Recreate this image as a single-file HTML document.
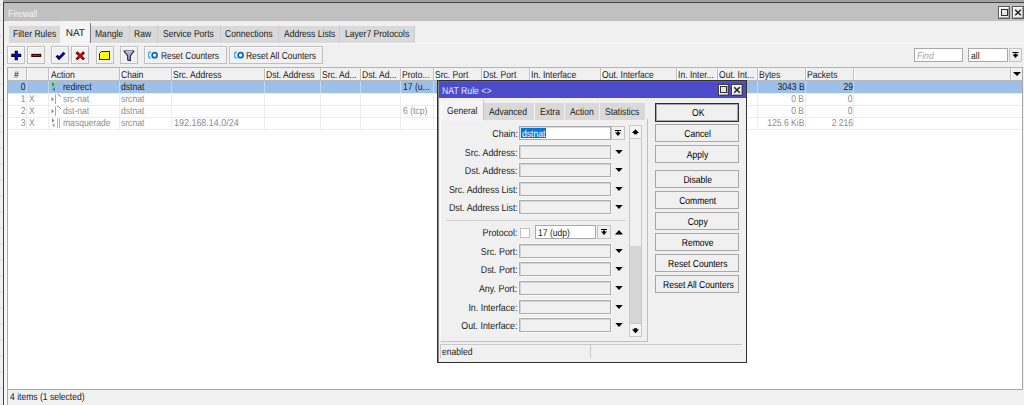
<!DOCTYPE html><html><head><meta charset="utf-8"><style>
*{margin:0;padding:0}
html,body{width:1024px;height:405px;overflow:hidden;background:#f0f0f0}
body{position:relative;font-family:"Liberation Sans",sans-serif;font-size:10px;text-rendering:geometricPrecision}
.a{position:absolute}
.t{position:absolute;white-space:nowrap;line-height:12px;transform:scaleX(0.855);transform-origin:0 0}
.t.r{transform-origin:100% 0}
.cb{text-align:center;white-space:nowrap;font-size:10px}
.cb span{display:inline-block;transform:scaleX(0.855);transform-origin:50% 0}
</style></head><body><div class="a" style="left:3px;top:0px;width:1021px;height:1px;background:#a0a0a0;"></div>
<div class="a" style="left:3px;top:1px;width:1021px;height:1px;background:#a8a8a8;"></div>
<div class="a" style="left:3px;top:2px;width:1021px;height:1px;background:#404040;"></div>
<div class="a" style="left:3px;top:2px;width:1px;height:403px;background:#404040;"></div>
<div class="a" style="left:4px;top:3px;width:1020px;height:18px;background:#c0c0c0;"></div>
<div class="t" style="left:8px;top:9px;color:#f4f4f4;transform:scaleX(0.85);">Firewall</div>
<div class="a" style="left:998px;top:6px;width:12px;height:13px;background:#eeeeee;border:1px solid #5a5a5a;box-sizing:border-box;"></div>
<div class="a" style="left:999px;top:7px;width:10px;height:11px;border-top:1px solid #fff;border-left:1px solid #fff;border-right:1px solid #a8a8a8;border-bottom:1px solid #a8a8a8;box-sizing:border-box;"></div>
<div class="a" style="left:1001px;top:9px;width:7px;height:7px;background:#ebe6eb;border:1px solid #303030;border-top-width:1.5px;box-sizing:border-box;"></div>
<div class="a" style="left:1012px;top:6px;width:12px;height:13px;background:#eeeeee;border:1px solid #5a5a5a;box-sizing:border-box;"></div>
<div class="a" style="left:1013px;top:7px;width:10px;height:11px;border-top:1px solid #fff;border-left:1px solid #fff;border-right:1px solid #a8a8a8;border-bottom:1px solid #a8a8a8;box-sizing:border-box;"></div>
<svg class="a" style="left:1012px;top:6px" width="12" height="13"><path d="M3.2 3.7L8.8 9.3M8.8 3.7L3.2 9.3" stroke="#252525" stroke-width="1.5"/></svg>
<div class="a" style="left:9px;top:26px;width:51px;height:17px;background:#d9d9d9;"></div>
<div class="t" style="left:12.8px;top:29px;color:#1a1a1a;">Filter Rules</div>
<div class="a" style="left:60px;top:22px;width:31px;height:21px;background:#f4f4f4;"></div>
<div class="a" style="left:90px;top:23px;width:1px;height:20px;background:#7c7c7c;"></div>
<div class="t" style="left:65.7px;top:28px;color:#1a1a1a;transform:scaleX(1.0);">NAT</div>
<div class="a" style="left:91px;top:26px;width:38px;height:17px;background:#d9d9d9;"></div>
<div class="a" style="left:129px;top:25px;width:1px;height:18px;background:#cdcdcd;"></div>
<div class="t" style="left:94.8px;top:29px;color:#1a1a1a;">Mangle</div>
<div class="a" style="left:130px;top:26px;width:27px;height:17px;background:#d9d9d9;"></div>
<div class="a" style="left:157px;top:25px;width:1px;height:18px;background:#cdcdcd;"></div>
<div class="t" style="left:134.0px;top:29px;color:#1a1a1a;">Raw</div>
<div class="a" style="left:158px;top:26px;width:62px;height:17px;background:#d9d9d9;"></div>
<div class="a" style="left:220px;top:25px;width:1px;height:18px;background:#cdcdcd;"></div>
<div class="t" style="left:163.2px;top:29px;color:#1a1a1a;">Service Ports</div>
<div class="a" style="left:221px;top:26px;width:57px;height:17px;background:#d9d9d9;"></div>
<div class="a" style="left:278px;top:25px;width:1px;height:18px;background:#cdcdcd;"></div>
<div class="t" style="left:224.7px;top:29px;color:#1a1a1a;">Connections</div>
<div class="a" style="left:279px;top:26px;width:60px;height:17px;background:#d9d9d9;"></div>
<div class="a" style="left:339px;top:25px;width:1px;height:18px;background:#cdcdcd;"></div>
<div class="t" style="left:283.5px;top:29px;color:#1a1a1a;">Address Lists</div>
<div class="a" style="left:340px;top:26px;width:74px;height:17px;background:#d9d9d9;"></div>
<div class="a" style="left:414px;top:25px;width:1px;height:18px;background:#cdcdcd;"></div>
<div class="t" style="left:345.1px;top:29px;color:#1a1a1a;">Layer7 Protocols</div>
<div class="a" style="left:4px;top:43px;width:1020px;height:1px;background:#f8f8f8;"></div>
<div class="a" style="left:7px;top:46px;width:18px;height:18px;background:#f0f0f0;border:1px solid #c0c0c0;box-sizing:border-box;box-shadow:inset 1px 1px 0 #fbfbfb;"></div>
<div class="a" style="left:27px;top:46px;width:18px;height:18px;background:#f0f0f0;border:1px solid #c0c0c0;box-sizing:border-box;box-shadow:inset 1px 1px 0 #fbfbfb;"></div>
<div class="a" style="left:51px;top:46px;width:18px;height:18px;background:#f0f0f0;border:1px solid #c0c0c0;box-sizing:border-box;box-shadow:inset 1px 1px 0 #fbfbfb;"></div>
<div class="a" style="left:71px;top:46px;width:18px;height:18px;background:#f0f0f0;border:1px solid #c0c0c0;box-sizing:border-box;box-shadow:inset 1px 1px 0 #fbfbfb;"></div>
<div class="a" style="left:96px;top:46px;width:18px;height:18px;background:#f0f0f0;border:1px solid #c0c0c0;box-sizing:border-box;box-shadow:inset 1px 1px 0 #fbfbfb;"></div>
<div class="a" style="left:120px;top:46px;width:18px;height:18px;background:#f0f0f0;border:1px solid #c0c0c0;box-sizing:border-box;box-shadow:inset 1px 1px 0 #fbfbfb;"></div>
<div class="a" style="left:144px;top:46px;width:83px;height:18px;background:#f0f0f0;border:1px solid #c0c0c0;box-sizing:border-box;box-shadow:inset 1px 1px 0 #fbfbfb;"></div>
<div class="a" style="left:229px;top:46px;width:94px;height:18px;background:#f0f0f0;border:1px solid #c0c0c0;box-sizing:border-box;box-shadow:inset 1px 1px 0 #fbfbfb;"></div>
<svg class="a" style="left:7px;top:46px" width="18" height="18"><path d="M9.3 4.8V14.2M4.3 9.4H14.2" stroke="#000018" stroke-width="3.1"/><path d="M9.3 5.8V13.2M5.3 9.4H13.2" stroke="#0000ff" stroke-width="1.3"/></svg>
<svg class="a" style="left:27px;top:46px" width="18" height="18"><path d="M4.3 9.4H14.2" stroke="#180000" stroke-width="3.1"/><path d="M5.3 9.4H13.2" stroke="#ff0000" stroke-width="1.3"/></svg>
<svg class="a" style="left:51px;top:46px" width="18" height="18"><path d="M5.6 9.6L8 12.2L13.4 6.8" fill="none" stroke="#000020" stroke-width="2.7"/><path d="M6.2 9.9L8 11.7L12.9 7.2" fill="none" stroke="#0000ff" stroke-width="1.3"/></svg>
<svg class="a" style="left:71px;top:46px" width="18" height="18"><path d="M5.5 6.2L13 13.4M13 6.2L5.5 13.4" stroke="#2a0000" stroke-width="2.7"/><path d="M6.1 6.8L12.4 12.8M12.4 6.8L6.1 12.8" stroke="#ff0000" stroke-width="1.4"/></svg>
<svg class="a" style="left:96px;top:46px" width="18" height="18"><path d="M3.5 7.5L5.5 5.5H13.5V13.5H3.5Z" fill="#ffff00" stroke="#202020" stroke-width="1"/></svg>
<svg class="a" style="left:120px;top:46px" width="18" height="18"><path d="M4 5H14L10.3 10V14.8L7.7 14V10Z" fill="#a4ace0" stroke="#1c1c30" stroke-width="1.1" stroke-linejoin="round"/><path d="M5.5 5.6H12.5" stroke="#e8ecff" stroke-width=".8"/></svg>
<svg class="a" style="left:148px;top:50px" width="11" height="10"><path d="M2.6 1.8A3.6 3.4 0 0 0 2.6 8.2" fill="none" stroke="#30b0ff" stroke-width="1.5"/><circle cx="6.6" cy="5.2" r="2.5" fill="#e8f4ff" stroke="#1464b4" stroke-width="1.7"/></svg>
<svg class="a" style="left:233.5px;top:50px" width="11" height="10"><path d="M2.6 1.8A3.6 3.4 0 0 0 2.6 8.2" fill="none" stroke="#30b0ff" stroke-width="1.5"/><circle cx="6.6" cy="5.2" r="2.5" fill="#e8f4ff" stroke="#1464b4" stroke-width="1.7"/></svg>
<div class="t" style="left:160.5px;top:51px;color:#1a1a1a;transform:scaleX(0.835);">Reset Counters</div>
<div class="t" style="left:245.5px;top:51px;color:#1a1a1a;transform:scaleX(0.845);">Reset All Counters</div>
<div class="a" style="left:914px;top:48px;width:49px;height:14px;background:#ffffff;border:1px solid #a8a8a8;box-sizing:border-box;"></div>
<div class="t" style="left:917px;top:51px;color:#a8a8a8;font-style:italic;">Find</div>
<div class="a" style="left:968px;top:48px;width:40px;height:14px;background:#ffffff;border:1px solid #a8a8a8;box-sizing:border-box;"></div>
<div class="t" style="left:971px;top:51px;color:#1a1a1a;">all</div>
<div class="a" style="left:1009px;top:48px;width:13px;height:14px;background:#f0f0f0;border:1px solid #c4c4c4;box-sizing:border-box;"></div>
<svg class="a" style="left:1009px;top:48px" width="13" height="14"><path d="M3.5 4.5H9.5" stroke="#000" stroke-width="1"/><path d="M3.5 6.5H9.5L6.5 10Z" fill="#000"/><path d="M5.5 5.5H7.5V7.5H5.5Z" fill="#000"/></svg>
<div class="a" style="left:7px;top:67px;width:1016px;height:323px;background:#ffffff;"></div>
<div class="a" style="left:7px;top:67px;width:1016px;height:1px;background:#b4b4b4;"></div>
<div class="a" style="left:7px;top:67px;width:1px;height:323px;background:#a8a8a8;"></div>
<div class="a" style="left:1022px;top:67px;width:1px;height:323px;background:#a8a8a8;"></div>
<div class="a" style="left:7px;top:389px;width:1016px;height:1px;background:#a8a8a8;"></div>
<div class="a" style="left:8px;top:68px;width:1014px;height:12px;background:#f0f0f0;"></div>
<div class="a" style="left:8px;top:80px;width:1014px;height:1px;background:#b8b8b8;"></div>
<div class="a" style="left:8px;top:81px;width:1014px;height:12px;background:#9dc0e9;"></div>
<div class="a" style="left:8px;top:93px;width:1014px;height:1px;background:#ececec;"></div>
<div class="a" style="left:8px;top:105px;width:1014px;height:1px;background:#ececec;"></div>
<div class="a" style="left:8px;top:117px;width:1014px;height:1px;background:#ececec;"></div>
<div class="a" style="left:8px;top:129px;width:1014px;height:1px;background:#ececec;"></div>
<div class="a" style="left:26px;top:68px;width:1px;height:12px;background:#c0c0c0;"></div>
<div class="a" style="left:27px;top:68px;width:1px;height:12px;background:#ffffff;"></div>
<div class="a" style="left:26px;top:93px;width:1px;height:37px;background:#ececec;"></div>
<div class="a" style="left:26px;top:81px;width:1px;height:12px;background:#c4d8f2;"></div>
<div class="a" style="left:48px;top:68px;width:1px;height:12px;background:#c0c0c0;"></div>
<div class="a" style="left:49px;top:68px;width:1px;height:12px;background:#ffffff;"></div>
<div class="a" style="left:48px;top:93px;width:1px;height:37px;background:#ececec;"></div>
<div class="a" style="left:48px;top:81px;width:1px;height:12px;background:#c4d8f2;"></div>
<div class="a" style="left:119px;top:68px;width:1px;height:12px;background:#c0c0c0;"></div>
<div class="a" style="left:120px;top:68px;width:1px;height:12px;background:#ffffff;"></div>
<div class="a" style="left:119px;top:93px;width:1px;height:37px;background:#ececec;"></div>
<div class="a" style="left:119px;top:81px;width:1px;height:12px;background:#c4d8f2;"></div>
<div class="a" style="left:171px;top:68px;width:1px;height:12px;background:#c0c0c0;"></div>
<div class="a" style="left:172px;top:68px;width:1px;height:12px;background:#ffffff;"></div>
<div class="a" style="left:171px;top:93px;width:1px;height:37px;background:#ececec;"></div>
<div class="a" style="left:171px;top:81px;width:1px;height:12px;background:#c4d8f2;"></div>
<div class="a" style="left:264px;top:68px;width:1px;height:12px;background:#c0c0c0;"></div>
<div class="a" style="left:265px;top:68px;width:1px;height:12px;background:#ffffff;"></div>
<div class="a" style="left:264px;top:93px;width:1px;height:37px;background:#ececec;"></div>
<div class="a" style="left:264px;top:81px;width:1px;height:12px;background:#c4d8f2;"></div>
<div class="a" style="left:320px;top:68px;width:1px;height:12px;background:#c0c0c0;"></div>
<div class="a" style="left:321px;top:68px;width:1px;height:12px;background:#ffffff;"></div>
<div class="a" style="left:320px;top:93px;width:1px;height:37px;background:#ececec;"></div>
<div class="a" style="left:320px;top:81px;width:1px;height:12px;background:#c4d8f2;"></div>
<div class="a" style="left:360px;top:68px;width:1px;height:12px;background:#c0c0c0;"></div>
<div class="a" style="left:361px;top:68px;width:1px;height:12px;background:#ffffff;"></div>
<div class="a" style="left:360px;top:93px;width:1px;height:37px;background:#ececec;"></div>
<div class="a" style="left:360px;top:81px;width:1px;height:12px;background:#c4d8f2;"></div>
<div class="a" style="left:400px;top:68px;width:1px;height:12px;background:#c0c0c0;"></div>
<div class="a" style="left:401px;top:68px;width:1px;height:12px;background:#ffffff;"></div>
<div class="a" style="left:400px;top:93px;width:1px;height:37px;background:#ececec;"></div>
<div class="a" style="left:400px;top:81px;width:1px;height:12px;background:#c4d8f2;"></div>
<div class="a" style="left:433px;top:68px;width:1px;height:12px;background:#c0c0c0;"></div>
<div class="a" style="left:434px;top:68px;width:1px;height:12px;background:#ffffff;"></div>
<div class="a" style="left:433px;top:93px;width:1px;height:37px;background:#ececec;"></div>
<div class="a" style="left:433px;top:81px;width:1px;height:12px;background:#c4d8f2;"></div>
<div class="a" style="left:481px;top:68px;width:1px;height:12px;background:#c0c0c0;"></div>
<div class="a" style="left:482px;top:68px;width:1px;height:12px;background:#ffffff;"></div>
<div class="a" style="left:481px;top:93px;width:1px;height:37px;background:#ececec;"></div>
<div class="a" style="left:481px;top:81px;width:1px;height:12px;background:#c4d8f2;"></div>
<div class="a" style="left:529px;top:68px;width:1px;height:12px;background:#c0c0c0;"></div>
<div class="a" style="left:530px;top:68px;width:1px;height:12px;background:#ffffff;"></div>
<div class="a" style="left:529px;top:93px;width:1px;height:37px;background:#ececec;"></div>
<div class="a" style="left:529px;top:81px;width:1px;height:12px;background:#c4d8f2;"></div>
<div class="a" style="left:600px;top:68px;width:1px;height:12px;background:#c0c0c0;"></div>
<div class="a" style="left:601px;top:68px;width:1px;height:12px;background:#ffffff;"></div>
<div class="a" style="left:600px;top:93px;width:1px;height:37px;background:#ececec;"></div>
<div class="a" style="left:600px;top:81px;width:1px;height:12px;background:#c4d8f2;"></div>
<div class="a" style="left:676px;top:68px;width:1px;height:12px;background:#c0c0c0;"></div>
<div class="a" style="left:677px;top:68px;width:1px;height:12px;background:#ffffff;"></div>
<div class="a" style="left:676px;top:93px;width:1px;height:37px;background:#ececec;"></div>
<div class="a" style="left:676px;top:81px;width:1px;height:12px;background:#c4d8f2;"></div>
<div class="a" style="left:717px;top:68px;width:1px;height:12px;background:#c0c0c0;"></div>
<div class="a" style="left:718px;top:68px;width:1px;height:12px;background:#ffffff;"></div>
<div class="a" style="left:717px;top:93px;width:1px;height:37px;background:#ececec;"></div>
<div class="a" style="left:717px;top:81px;width:1px;height:12px;background:#c4d8f2;"></div>
<div class="a" style="left:757px;top:68px;width:1px;height:12px;background:#c0c0c0;"></div>
<div class="a" style="left:758px;top:68px;width:1px;height:12px;background:#ffffff;"></div>
<div class="a" style="left:757px;top:93px;width:1px;height:37px;background:#ececec;"></div>
<div class="a" style="left:757px;top:81px;width:1px;height:12px;background:#c4d8f2;"></div>
<div class="a" style="left:805px;top:68px;width:1px;height:12px;background:#c0c0c0;"></div>
<div class="a" style="left:806px;top:68px;width:1px;height:12px;background:#ffffff;"></div>
<div class="a" style="left:805px;top:93px;width:1px;height:37px;background:#ececec;"></div>
<div class="a" style="left:805px;top:81px;width:1px;height:12px;background:#c4d8f2;"></div>
<div class="a" style="left:853px;top:68px;width:1px;height:12px;background:#c0c0c0;"></div>
<div class="a" style="left:854px;top:68px;width:1px;height:12px;background:#ffffff;"></div>
<div class="a" style="left:853px;top:93px;width:1px;height:37px;background:#ececec;"></div>
<div class="a" style="left:853px;top:81px;width:1px;height:12px;background:#c4d8f2;"></div>
<div class="a" style="left:1010px;top:68px;width:1px;height:12px;background:#c0c0c0;"></div>
<div class="a" style="left:1011px;top:68px;width:1px;height:12px;background:#ffffff;"></div>
<div class="t" style="left:14px;top:70px;color:#1a1a1a;">#</div>
<div class="t" style="left:50.5px;top:70px;color:#1a1a1a;">Action</div>
<div class="t" style="left:121px;top:70px;color:#1a1a1a;">Chain</div>
<div class="t" style="left:172.5px;top:70px;color:#1a1a1a;">Src. Address</div>
<div class="t" style="left:265.5px;top:70px;color:#1a1a1a;">Dst. Address</div>
<div class="t" style="left:321.5px;top:70px;color:#1a1a1a;">Src. Ad...</div>
<div class="t" style="left:361.5px;top:70px;color:#1a1a1a;">Dst. Ad...</div>
<div class="t" style="left:401.5px;top:70px;color:#1a1a1a;">Proto...</div>
<div class="t" style="left:434.5px;top:70px;color:#1a1a1a;">Src. Port</div>
<div class="t" style="left:482.5px;top:70px;color:#1a1a1a;">Dst. Port</div>
<div class="t" style="left:530.5px;top:70px;color:#1a1a1a;">In. Interface</div>
<div class="t" style="left:601.5px;top:70px;color:#1a1a1a;">Out. Interface</div>
<div class="t" style="left:677.5px;top:70px;color:#1a1a1a;">In. Inter...</div>
<div class="t" style="left:718.5px;top:70px;color:#1a1a1a;">Out. Int...</div>
<div class="t" style="left:758.5px;top:70px;color:#1a1a1a;">Bytes</div>
<div class="t" style="left:806.5px;top:70px;color:#1a1a1a;">Packets</div>
<svg class="a" style="left:1012px;top:70px" width="10" height="8"><path d="M1 2H9L5 6Z" fill="#000"/></svg>
<div class="t r" style="right:998.5px;top:82px;color:#1a1a1a;">0</div>
<div class="t" style="left:62.5px;top:82px;color:#1a1a1a;">redirect</div>
<div class="t" style="left:121px;top:82px;color:#1a1a1a;">dstnat</div>
<div class="t" style="left:403px;top:82px;color:#1a1a1a;">17 (u...</div>
<div class="t r" style="right:219.5px;top:82px;color:#1a1a1a;">3043 B</div>
<div class="t r" style="right:171px;top:82px;color:#1a1a1a;">29</div>
<svg class="a" style="left:50px;top:81px" width="12" height="12"><path d="M2 1L5 3.5L2 6Z" fill="#20b020"/><path d="M5 6L2 8.3L5 10.5Z" fill="#5a80a4"/><path d="M7.5 1.5V11M9.5 1.5V11" stroke="#a8b4c0" stroke-width="1"/></svg>
<div class="t r" style="right:998.5px;top:94px;color:#8c8c8c;">1</div>
<div class="t" style="left:28.5px;top:94px;color:#8c8c8c;">X</div>
<div class="t" style="left:62.5px;top:94px;color:#8c8c8c;">src-nat</div>
<div class="t" style="left:121px;top:94px;color:#8c8c8c;">srcnat</div>
<div class="t r" style="right:219.5px;top:94px;color:#8c8c8c;">0 B</div>
<div class="t r" style="right:171px;top:94px;color:#8c8c8c;">0</div>
<svg class="a" style="left:50px;top:93px" width="12" height="12"><path d="M1.5 4L4 6.3L1.5 8.6Z" fill="#8c8c8c"/><path d="M5.5 1.5V11" stroke="#a8a8a8" stroke-width="1"/><path d="M7.6 1.7H8.6L10.6 3.6" fill="none" stroke="#707070" stroke-width="1"/></svg>
<div class="t r" style="right:998.5px;top:106px;color:#8c8c8c;">2</div>
<div class="t" style="left:28.5px;top:106px;color:#8c8c8c;">X</div>
<div class="t" style="left:62.5px;top:106px;color:#8c8c8c;">dst-nat</div>
<div class="t" style="left:121px;top:106px;color:#8c8c8c;">dstnat</div>
<div class="t" style="left:403px;top:106px;color:#8c8c8c;">6 (tcp)</div>
<div class="t r" style="right:219.5px;top:106px;color:#8c8c8c;">0 B</div>
<div class="t r" style="right:171px;top:106px;color:#8c8c8c;">0</div>
<svg class="a" style="left:50px;top:105px" width="12" height="12"><path d="M1.5 4L4 6.3L1.5 8.6Z" fill="#8c8c8c"/><path d="M5.5 1.5V11" stroke="#a8a8a8" stroke-width="1"/><path d="M7.6 1.7H8.6L10.6 3.6" fill="none" stroke="#707070" stroke-width="1"/></svg>
<div class="t r" style="right:998.5px;top:118px;color:#8c8c8c;">3</div>
<div class="t" style="left:28.5px;top:118px;color:#8c8c8c;">X</div>
<div class="t" style="left:62.5px;top:118px;color:#8c8c8c;">masquerade</div>
<div class="t" style="left:121px;top:118px;color:#8c8c8c;">srcnat</div>
<div class="t" style="left:173.5px;top:118px;color:#8c8c8c;transform:scaleX(0.895);">192.168.14.0/24</div>
<div class="t r" style="right:219.5px;top:118px;color:#8c8c8c;">125.6 KiB</div>
<div class="t r" style="right:171px;top:118px;color:#8c8c8c;">2 216</div>
<svg class="a" style="left:50px;top:117px" width="12" height="12"><path d="M2 1L4.5 3.5L2 6Z" fill="#909090"/><path d="M4.5 6L2 8.3L4.5 10.5Z" fill="#a0a0a0"/><path d="M7.5 1.5V11M9.5 1.5V11" stroke="#b4b4b4" stroke-width="1"/></svg>
<div class="a" style="left:0px;top:4px;width:2px;height:1px;background:#d6d6d6;"></div>
<div class="a" style="left:0px;top:20px;width:2px;height:1px;background:#d6d6d6;"></div>
<div class="a" style="left:0px;top:36px;width:2px;height:1px;background:#d6d6d6;"></div>
<div class="a" style="left:0px;top:52px;width:2px;height:1px;background:#d6d6d6;"></div>
<div class="a" style="left:0px;top:68px;width:2px;height:1px;background:#d6d6d6;"></div>
<div class="a" style="left:0px;top:84px;width:2px;height:1px;background:#d6d6d6;"></div>
<div class="a" style="left:0px;top:100px;width:2px;height:1px;background:#d6d6d6;"></div>
<div class="a" style="left:0px;top:116px;width:2px;height:1px;background:#d6d6d6;"></div>
<div class="a" style="left:0px;top:132px;width:2px;height:1px;background:#d6d6d6;"></div>
<div class="a" style="left:0px;top:148px;width:2px;height:1px;background:#d6d6d6;"></div>
<div class="a" style="left:0px;top:164px;width:2px;height:1px;background:#d6d6d6;"></div>
<div class="a" style="left:0px;top:180px;width:2px;height:1px;background:#d6d6d6;"></div>
<div class="a" style="left:0px;top:196px;width:2px;height:1px;background:#d6d6d6;"></div>
<div class="a" style="left:0px;top:212px;width:2px;height:1px;background:#d6d6d6;"></div>
<div class="a" style="left:0px;top:228px;width:2px;height:1px;background:#d6d6d6;"></div>
<div class="a" style="left:0px;top:244px;width:2px;height:1px;background:#d6d6d6;"></div>
<div class="a" style="left:0px;top:260px;width:2px;height:1px;background:#d6d6d6;"></div>
<div class="a" style="left:0px;top:276px;width:2px;height:1px;background:#d6d6d6;"></div>
<div class="a" style="left:0px;top:292px;width:2px;height:1px;background:#d6d6d6;"></div>
<div class="a" style="left:0px;top:308px;width:2px;height:1px;background:#d6d6d6;"></div>
<div class="a" style="left:0px;top:324px;width:2px;height:1px;background:#d6d6d6;"></div>
<div class="a" style="left:0px;top:340px;width:2px;height:1px;background:#d6d6d6;"></div>
<div class="a" style="left:0px;top:356px;width:2px;height:1px;background:#d6d6d6;"></div>
<div class="a" style="left:0px;top:372px;width:2px;height:1px;background:#d6d6d6;"></div>
<div class="a" style="left:0px;top:388px;width:2px;height:1px;background:#d6d6d6;"></div>
<div class="a" style="left:0px;top:404px;width:2px;height:1px;background:#d6d6d6;"></div>
<div class="t" style="left:9.5px;top:392px;color:#1a1a1a;">4 items (1 selected)</div>
<div class="a" style="left:7px;top:389px;width:1px;height:16px;background:#a8a8a8;"></div>
<div class="a" style="left:4px;top:67px;width:3px;height:338px;background:#f6f6f6;"></div>
<div class="a" style="left:437px;top:80px;width:310px;height:283px;background:#f0f0f0;border:1px solid #303030;box-sizing:border-box;"></div>
<div class="a" style="left:438px;top:81px;width:1px;height:281px;background:#8a8a8a;"></div>
<div class="a" style="left:439px;top:81px;width:307px;height:17px;background:#4c4cca;"></div>
<div class="a" style="left:439px;top:81px;width:307px;height:1px;background:#5858d6;"></div>
<div class="t" style="left:441.5px;top:86px;color:#e4e4ff;transform:scaleX(0.87);">NAT Rule &lt;&gt;</div>
<div class="a" style="left:718px;top:84px;width:11px;height:12px;background:#eeeeee;border:1px solid #404040;box-sizing:border-box;"></div>
<div class="a" style="left:719px;top:85px;width:9px;height:10px;border-top:1px solid #fff;border-left:1px solid #fff;border-right:1px solid #a8a8a8;border-bottom:1px solid #a8a8a8;box-sizing:border-box;"></div>
<div class="a" style="left:720px;top:86px;width:7px;height:7px;background:#ebe6eb;border:1px solid #303030;border-top-width:1.5px;box-sizing:border-box;"></div>
<div class="a" style="left:731px;top:84px;width:12px;height:12px;background:#eeeeee;border:1px solid #404040;box-sizing:border-box;"></div>
<div class="a" style="left:732px;top:85px;width:10px;height:10px;border-top:1px solid #fff;border-left:1px solid #fff;border-right:1px solid #a8a8a8;border-bottom:1px solid #a8a8a8;box-sizing:border-box;"></div>
<svg class="a" style="left:731px;top:84px" width="12" height="12"><path d="M3.2 3.2L8.8 8.8M8.8 3.2L3.2 8.8" stroke="#252525" stroke-width="1.5"/></svg>
<div class="a" style="left:440px;top:119px;width:208px;height:223px;background:#f0f0f0;border-right:1px solid #c0c0c0;border-bottom:1px solid #c0c0c0;border-left:1px solid #fafafa;box-sizing:border-box;"></div>
<div class="a" style="left:440px;top:99.5px;width:43px;height:21px;background:#f4f4f4;"></div>
<div class="a" style="left:483px;top:100px;width:1px;height:20px;background:#c4c4c4;"></div>
<div class="a" style="left:441px;top:101px;width:1px;height:19px;background:#ffffff;"></div>
<div class="t" style="left:446.8px;top:105.5px;color:#1a1a1a;">General</div>
<div class="a" style="left:484px;top:103px;width:50px;height:17px;background:#d9d9d9;"></div>
<div class="t" style="left:489.0px;top:106.5px;color:#1a1a1a;">Advanced</div>
<div class="a" style="left:535px;top:103px;width:29px;height:17px;background:#d9d9d9;"></div>
<div class="t" style="left:539.5px;top:106.5px;color:#1a1a1a;">Extra</div>
<div class="a" style="left:565px;top:103px;width:34px;height:17px;background:#d9d9d9;"></div>
<div class="t" style="left:570.0px;top:106.5px;color:#1a1a1a;">Action</div>
<div class="a" style="left:600px;top:103px;width:45px;height:17px;background:#d9d9d9;"></div>
<div class="t" style="left:605.0px;top:106.5px;color:#1a1a1a;">Statistics</div>
<div class="t r" style="right:506.5px;top:128.5px;color:#1a1a1a;transform:scaleX(0.885);">Chain:</div>
<div class="a" style="left:519px;top:126px;width:92px;height:14px;background:#ffffff;border:1px solid #a8a8a8;box-sizing:border-box;box-shadow:inset 1px 1px 0 #d8d8d8;"></div>
<div class="a" style="left:521px;top:128px;width:25px;height:10px;background:#0078d7;"></div>
<div class="t" style="left:521.5px;top:128.5px;color:#ffffff;">dstnat</div>
<div class="a" style="left:611px;top:126px;width:14px;height:14px;background:#f0f0f0;border:1px solid #c4c4c4;box-sizing:border-box;"></div>
<svg class="a" style="left:611px;top:126px" width="14" height="14"><path d="M4 4.5H10" stroke="#000" stroke-width="1"/><path d="M4 6.5H10L7 10Z" fill="#000"/><path d="M6 5.5H8V7.5H6Z" fill="#000"/></svg>
<div class="t r" style="right:506.5px;top:147.5px;color:#1a1a1a;transform:scaleX(0.885);">Src. Address:</div>
<div class="a" style="left:519px;top:145px;width:92px;height:14px;background:#f0f0f0;border:1px solid #adadad;box-sizing:border-box;box-shadow:inset 1px 1px 0 #d4d4d4, 0 0 0 1px #f8f8f8;"></div>
<svg class="a" style="left:614px;top:145px" width="10" height="14"><path d="M1.3 5H8.7L5 9Z" fill="#000"/></svg>
<div class="t r" style="right:506.5px;top:165.5px;color:#1a1a1a;transform:scaleX(0.885);">Dst. Address:</div>
<div class="a" style="left:519px;top:163px;width:92px;height:14px;background:#f0f0f0;border:1px solid #adadad;box-sizing:border-box;box-shadow:inset 1px 1px 0 #d4d4d4, 0 0 0 1px #f8f8f8;"></div>
<svg class="a" style="left:614px;top:163px" width="10" height="14"><path d="M1.3 5H8.7L5 9Z" fill="#000"/></svg>
<div class="t r" style="right:506.5px;top:184.5px;color:#1a1a1a;transform:scaleX(0.885);">Src. Address List:</div>
<div class="a" style="left:519px;top:182px;width:92px;height:14px;background:#f0f0f0;border:1px solid #adadad;box-sizing:border-box;box-shadow:inset 1px 1px 0 #d4d4d4, 0 0 0 1px #f8f8f8;"></div>
<svg class="a" style="left:614px;top:182px" width="10" height="14"><path d="M1.3 5H8.7L5 9Z" fill="#000"/></svg>
<div class="t r" style="right:506.5px;top:202.5px;color:#1a1a1a;transform:scaleX(0.885);">Dst. Address List:</div>
<div class="a" style="left:519px;top:200px;width:92px;height:14px;background:#f0f0f0;border:1px solid #adadad;box-sizing:border-box;box-shadow:inset 1px 1px 0 #d4d4d4, 0 0 0 1px #f8f8f8;"></div>
<svg class="a" style="left:614px;top:200px" width="10" height="14"><path d="M1.3 5H8.7L5 9Z" fill="#000"/></svg>
<div class="t r" style="right:506.5px;top:227.5px;color:#1a1a1a;transform:scaleX(0.885);">Protocol:</div>
<div class="a" style="left:520px;top:228px;width:10px;height:10px;background:#ffffff;border:1px solid #c0c0c0;box-sizing:border-box;"></div>
<div class="a" style="left:535px;top:225px;width:61px;height:14px;background:#ffffff;border:1px solid #a8a8a8;box-sizing:border-box;"></div>
<div class="t" style="left:537.5px;top:227.5px;color:#1a1a1a;">17 (udp)</div>
<div class="a" style="left:597px;top:225px;width:14px;height:14px;background:#f0f0f0;border:1px solid #c4c4c4;box-sizing:border-box;"></div>
<svg class="a" style="left:597px;top:225px" width="14" height="14"><path d="M4 4.5H10" stroke="#000" stroke-width="1"/><path d="M4 6.5H10L7 10Z" fill="#000"/><path d="M6 5.5H8V7.5H6Z" fill="#000"/></svg>
<svg class="a" style="left:614px;top:225px" width="10" height="14"><path d="M1 9.5H9L5 5Z" fill="#000"/></svg>
<div class="t r" style="right:506.5px;top:246.5px;color:#1a1a1a;transform:scaleX(0.885);">Src. Port:</div>
<div class="a" style="left:519px;top:244px;width:92px;height:14px;background:#f0f0f0;border:1px solid #adadad;box-sizing:border-box;box-shadow:inset 1px 1px 0 #d4d4d4, 0 0 0 1px #f8f8f8;"></div>
<svg class="a" style="left:614px;top:244px" width="10" height="14"><path d="M1.3 5H8.7L5 9Z" fill="#000"/></svg>
<div class="t r" style="right:506.5px;top:264.5px;color:#1a1a1a;transform:scaleX(0.885);">Dst. Port:</div>
<div class="a" style="left:519px;top:262px;width:92px;height:14px;background:#f0f0f0;border:1px solid #adadad;box-sizing:border-box;box-shadow:inset 1px 1px 0 #d4d4d4, 0 0 0 1px #f8f8f8;"></div>
<svg class="a" style="left:614px;top:262px" width="10" height="14"><path d="M1.3 5H8.7L5 9Z" fill="#000"/></svg>
<div class="t r" style="right:506.5px;top:283.5px;color:#1a1a1a;transform:scaleX(0.885);">Any. Port:</div>
<div class="a" style="left:519px;top:281px;width:92px;height:14px;background:#f0f0f0;border:1px solid #adadad;box-sizing:border-box;box-shadow:inset 1px 1px 0 #d4d4d4, 0 0 0 1px #f8f8f8;"></div>
<svg class="a" style="left:614px;top:281px" width="10" height="14"><path d="M1.3 5H8.7L5 9Z" fill="#000"/></svg>
<div class="t r" style="right:506.5px;top:302.5px;color:#1a1a1a;transform:scaleX(0.885);">In. Interface:</div>
<div class="a" style="left:519px;top:300px;width:92px;height:14px;background:#f0f0f0;border:1px solid #adadad;box-sizing:border-box;box-shadow:inset 1px 1px 0 #d4d4d4, 0 0 0 1px #f8f8f8;"></div>
<svg class="a" style="left:614px;top:300px" width="10" height="14"><path d="M1.3 5H8.7L5 9Z" fill="#000"/></svg>
<div class="t r" style="right:506.5px;top:320.5px;color:#1a1a1a;transform:scaleX(0.885);">Out. Interface:</div>
<div class="a" style="left:519px;top:318px;width:92px;height:14px;background:#f0f0f0;border:1px solid #adadad;box-sizing:border-box;box-shadow:inset 1px 1px 0 #d4d4d4, 0 0 0 1px #f8f8f8;"></div>
<svg class="a" style="left:614px;top:318px" width="10" height="14"><path d="M1.3 5H8.7L5 9Z" fill="#000"/></svg>
<div class="a" style="left:446px;top:220px;width:180px;height:1px;background:#d0d0d0;"></div>
<div class="a" style="left:629px;top:125px;width:13px;height:212px;background:#f0f0f0;border:1px solid #c8c8c8;box-sizing:border-box;"></div>
<div class="a" style="left:630px;top:246px;width:11px;height:77px;background:#d6d6d6;"></div>
<div class="a" style="left:629px;top:125px;width:13px;height:14px;background:#f4f4f4;border:1px solid #c8c8c8;box-sizing:border-box;"></div>
<div class="a" style="left:629px;top:323px;width:13px;height:14px;background:#f4f4f4;border:1px solid #c8c8c8;box-sizing:border-box;"></div>
<svg class="a" style="left:629px;top:125px" width="13" height="14"><path d="M3 8L6.5 4.3L10 8H8.2V9.3H4.8V8Z" fill="#000"/></svg>
<svg class="a" style="left:629px;top:323px" width="13" height="14"><path d="M3 6.5L6.5 10.2L10 6.5H8.2V5.2H4.8V6.5Z" fill="#000"/></svg>
<div class="a" style="left:655px;top:103px;width:84px;height:19px;background:#f0f0f0;border:1px solid #303030;box-sizing:border-box;"></div>
<div class="a" style="left:656px;top:104px;width:82px;height:17px;border:1px solid #a8a8a8;box-sizing:border-box;"></div>
<div class="a cb" style="left:656px;top:105px;width:84px;height:18px;line-height:18px"><span>OK</span></div>
<div class="a" style="left:655px;top:124px;width:84px;height:18px;background:#f0f0f0;border:1px solid #a8a8a8;box-sizing:border-box;"></div>
<div class="a cb" style="left:656px;top:126px;width:84px;height:18px;line-height:18px"><span>Cancel</span></div>
<div class="a" style="left:655px;top:145px;width:84px;height:18px;background:#f0f0f0;border:1px solid #a8a8a8;box-sizing:border-box;"></div>
<div class="a cb" style="left:656px;top:147px;width:84px;height:18px;line-height:18px"><span>Apply</span></div>
<div class="a" style="left:655px;top:170px;width:84px;height:18px;background:#f0f0f0;border:1px solid #a8a8a8;box-sizing:border-box;"></div>
<div class="a cb" style="left:656px;top:172px;width:84px;height:18px;line-height:18px"><span>Disable</span></div>
<div class="a" style="left:655px;top:191px;width:84px;height:18px;background:#f0f0f0;border:1px solid #a8a8a8;box-sizing:border-box;"></div>
<div class="a cb" style="left:656px;top:193px;width:84px;height:18px;line-height:18px"><span>Comment</span></div>
<div class="a" style="left:655px;top:212px;width:84px;height:18px;background:#f0f0f0;border:1px solid #a8a8a8;box-sizing:border-box;"></div>
<div class="a cb" style="left:656px;top:214px;width:84px;height:18px;line-height:18px"><span>Copy</span></div>
<div class="a" style="left:655px;top:233px;width:84px;height:18px;background:#f0f0f0;border:1px solid #a8a8a8;box-sizing:border-box;"></div>
<div class="a cb" style="left:656px;top:235px;width:84px;height:18px;line-height:18px"><span>Remove</span></div>
<div class="a" style="left:655px;top:254px;width:84px;height:18px;background:#f0f0f0;border:1px solid #a8a8a8;box-sizing:border-box;"></div>
<div class="a cb" style="left:656px;top:256px;width:84px;height:18px;line-height:18px"><span>Reset Counters</span></div>
<div class="a" style="left:655px;top:274.5px;width:84px;height:18px;background:#f0f0f0;border:1px solid #a8a8a8;box-sizing:border-box;"></div>
<div class="a cb" style="left:656px;top:276.5px;width:84px;height:18px;line-height:18px"><span>Reset All Counters</span></div>
<div class="a" style="left:440px;top:344px;width:302px;height:1px;background:#c8c8c8;"></div>
<div class="a" style="left:440px;top:345px;width:151px;height:13px;border-left:1px solid #c8c8c8;"></div>
<div class="a" style="left:590px;top:345px;width:1px;height:13px;background:#c8c8c8;"></div>
<div class="t" style="left:442px;top:347px;color:#1a1a1a;">enabled</div></body></html>
